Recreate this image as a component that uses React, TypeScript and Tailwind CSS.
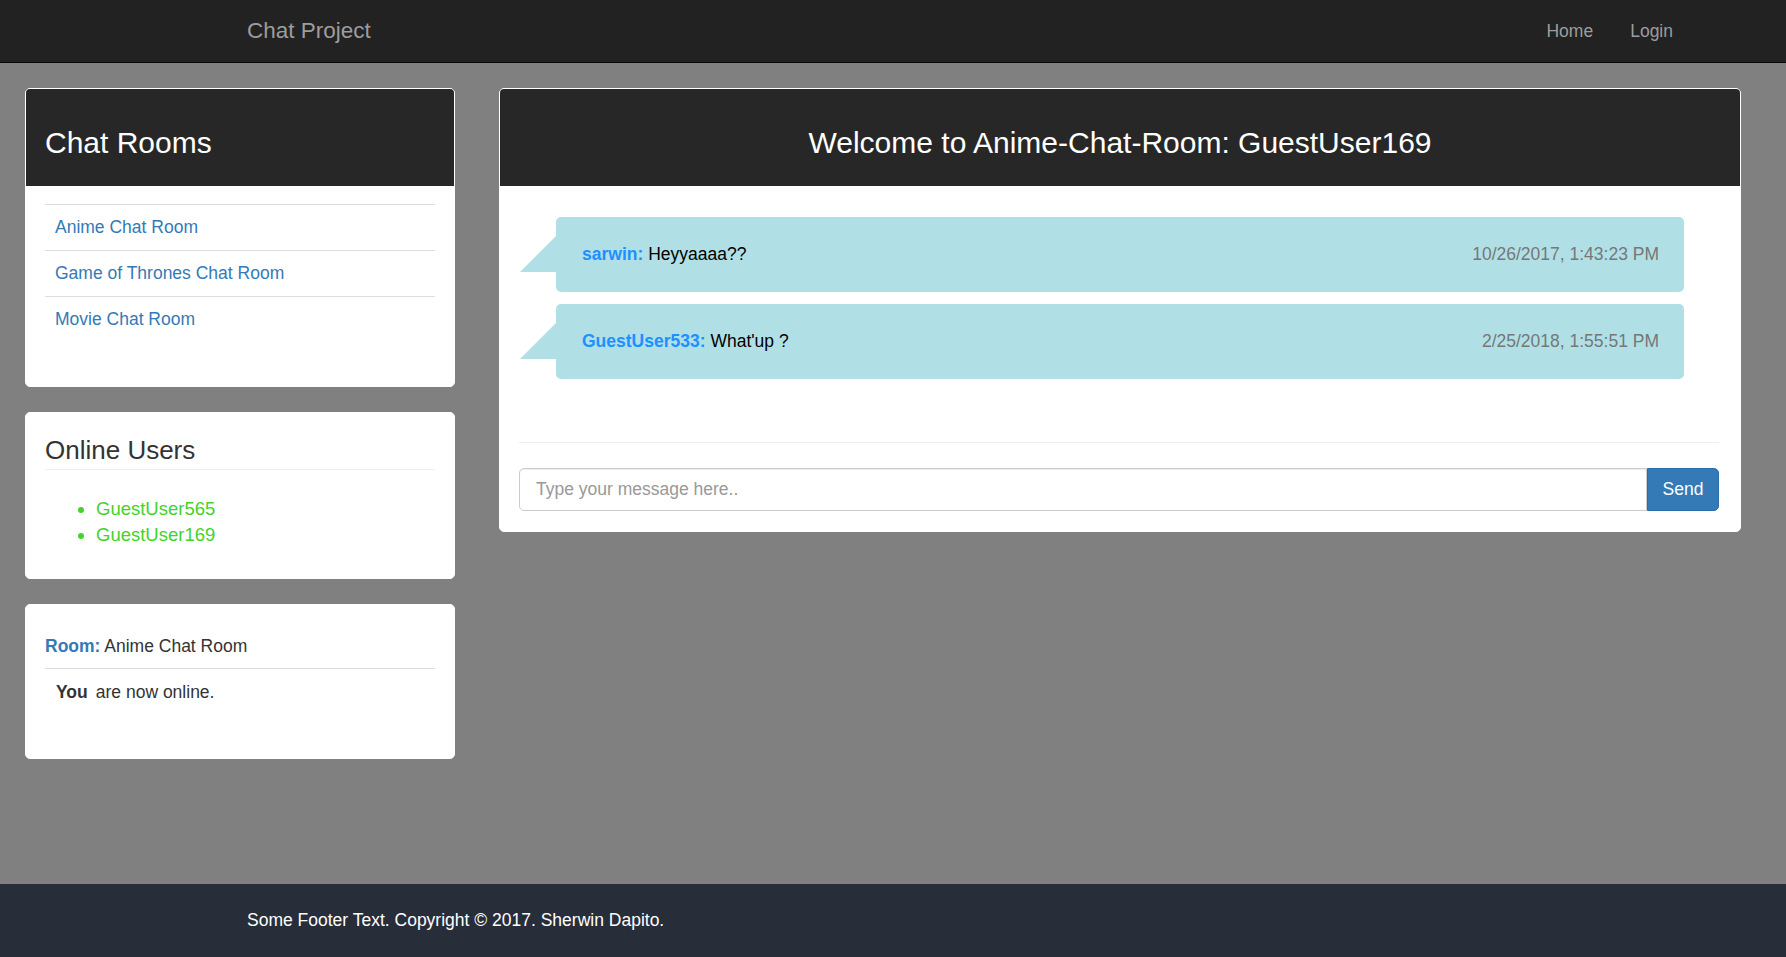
import React from "react";

const rooms = ["Anime Chat Room", "Game of Thrones Chat Room", "Movie Chat Room"];
const users = ["GuestUser565", "GuestUser169"];
const messages = [
    { user: "sarwin", text: "Heyyaaaa??", time: "10/26/2017, 1:43:23 PM" },
    { user: "GuestUser533", text: "What'up ?", time: "2/25/2018, 1:55:51 PM" },
];

function Bubble({ user, text, time }: { user: string; text: string; time: string }) {
    return (
        <div className="relative flex h-[75px] items-center justify-between rounded-[5px] bg-[#b0e0e6] pl-[26px] pr-[25px]">
            <span className="absolute left-[-36px] top-[19px] h-[36px] w-[36px] bg-[#b0e0e6] [clip-path:polygon(100%_0,100%_100%,0_100%)]" />
            <div className="text-[17.5px] text-black">
                <b className="text-[#1e90ff]">{user}:</b> {text}
            </div>
            <div className="text-[17.5px] text-[#777]">{time}</div>
        </div>
    );
}

export default function App() {
    return (
        <div className="flex min-h-screen flex-col bg-[#808080] font-['Liberation_Sans',Arial,sans-serif] text-[#333]">
            <nav className="flex h-[63px] items-center justify-between border-b border-[#080808] bg-[#222] pl-[247px] pr-[113px]">
                <div className="text-[22.5px] text-[#9d9d9d]">Chat Project</div>
                <div className="flex gap-[37px] text-[17.5px] text-[#9d9d9d]">
                    <span>Home</span>
                    <span>Login</span>
                </div>
            </nav>

            <main className="flex flex-1 items-start gap-[44px] pl-[25px] pr-[45px] pt-[25px]">
                <div className="flex w-[430px] flex-col gap-[25px]">
                    <div className="overflow-hidden rounded-[5px] border border-white bg-white">
                        <div className="bg-[#272727] px-[19px] pb-[27px] pt-[37px] text-[30px] leading-[33px] text-white">
                            Chat Rooms
                        </div>
                        <div className="px-[19px] pb-[44px] pt-[18px]">
                            {rooms.map((r) => (
                                <div key={r} className="flex h-[46px] items-center border-t border-[#ddd] pl-[10px] text-[17.5px] text-[#337ab7]">
                                    {r}
                                </div>
                            ))}
                        </div>
                    </div>

                    <div className="rounded-[5px] border border-white bg-white px-[19px] pb-[30px] pt-[23px]">
                        <div className="border-b border-[#eee] pb-[4px] text-[26px] leading-[28.6px] text-[#333]">Online Users</div>
                        <ul className="mt-[26px] list-disc pl-[51px] text-[18.5px] leading-[26px] text-[#45d22a]">
                            {users.map((u) => (
                                <li key={u}>{u}</li>
                            ))}
                        </ul>
                    </div>

                    <div className="rounded-[5px] border border-white bg-white px-[19px] pb-[53px] pt-[29px] text-[17.5px] leading-[25px]">
                        <div className="border-b border-[#ddd] pb-[9px]">
                            <b className="text-[#337ab7]">Room:</b> Anime Chat Room
                        </div>
                        <div className="pl-[11px] pt-[11px]">
                            <b>You</b>
                            <span className="ml-[8px]">are now online.</span>
                        </div>
                    </div>
                </div>

                <div className="flex-1 overflow-hidden rounded-[5px] border border-white bg-white">
                    <div className="bg-[#272727] pb-[27px] pt-[37px] text-center text-[30px] leading-[33px] text-white">
                        Welcome to Anime-Chat-Room: GuestUser169
                    </div>
                    <div className="pb-[20px] pl-[19px] pr-[21px] pt-[31px]">
                        <div className="flex flex-col gap-[12px] pl-[37px] pr-[35px]">
                            {messages.map((m) => (
                                <Bubble key={m.time} {...m} />
                            ))}
                        </div>
                        <div className="mt-[63px] border-t border-[#eee]" />
                        <div className="mt-[25px] flex h-[43px]">
                            <input
                                className="flex-1 rounded-l-[5px] border border-[#ccc] px-[16px] text-[17.5px] text-[#555] shadow-[inset_0_1px_1px_rgba(0,0,0,0.075)] outline-none placeholder:text-[#999]"
                                placeholder="Type your message here.."
                            />
                            <button className="w-[72px] rounded-r-[5px] border border-[#2e6da4] bg-[#337ab7] text-[17.5px] text-white">
                                Send
                            </button>
                        </div>
                    </div>
                </div>
            </main>

            <footer className="flex h-[73px] items-center bg-[#282d3a] pl-[247px] text-[17.5px] text-white">
                Some Footer Text. Copyright © 2017. Sherwin Dapito.
            </footer>
        </div>
    );
}
